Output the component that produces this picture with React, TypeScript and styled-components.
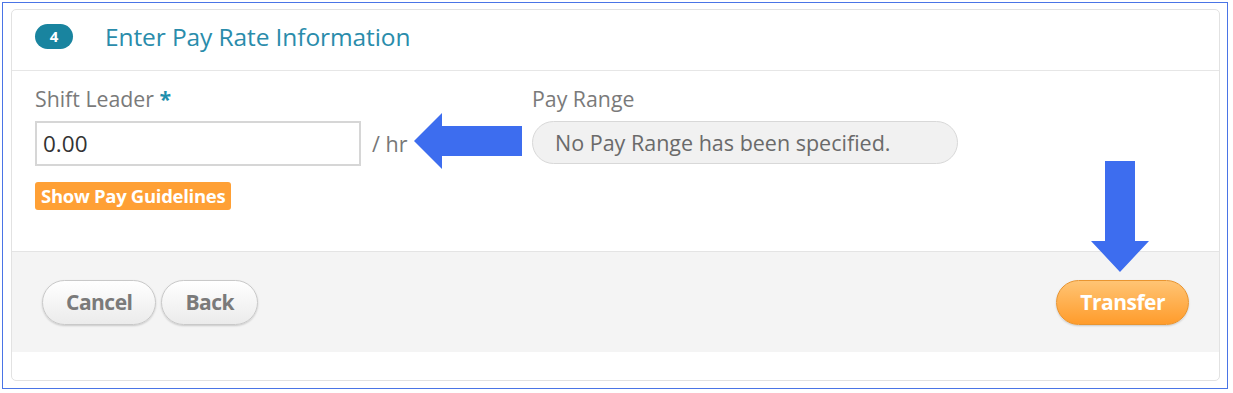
import React from "react";
import styled, { createGlobalStyle } from "styled-components";

const Global = createGlobalStyle`
  html, body { margin: 0; padding: 0; background: #ffffff; }
  body { font-family: "Open Sans", "Liberation Sans", sans-serif; }
  * { box-sizing: border-box; }
`;

const Frame = styled.div`
  position: relative;
  margin: 2px 0 0 2px;
  width: 1226px;
  height: 387px;
  border: 1.5px solid #4a74e6;
  padding: 6px 7px 7px 8px;
`;

const Card = styled.div`
  height: 100%;
  border: 1px solid #e2e2e2;
  border-radius: 5px;
  display: flex;
  flex-direction: column;
  background: #fff;
`;

const Header = styled.div`
  height: 61px;
  flex: none;
  display: flex;
  align-items: center;
  gap: 32px;
  padding: 0 0 8px 23px;
  border-bottom: 1px solid #e6e6e6;
`;

const StepBadge = styled.span`
  width: 38px;
  height: 25px;
  border-radius: 13px;
  background: #19849f;
  color: #fff;
  font-weight: 700;
  font-size: 15px;
  display: flex;
  align-items: center;
  justify-content: center;
`;

const Title = styled.h2`
  margin: 0;
  font-weight: 400;
  font-size: 24.5px;
  letter-spacing: -0.1px;
  color: #2a8cab;
`;

const Body = styled.div`
  flex: 1;
  padding: 15px 23px 0;
  display: flex;
  flex-direction: column;
`;

const FieldsRow = styled.div`
  display: flex;
  align-items: flex-start;
`;

const Field = styled.div<{ $width?: number }>`
  display: flex;
  flex-direction: column;
  width: ${(p) => (p.$width ? `${p.$width}px` : "auto")};
`;

const Label = styled.label`
  font-size: 21.3px;
  color: #7a7a7a;
  line-height: 26px;
  margin-bottom: 9px;
`;

const Required = styled.span`
  color: #1f8fad;
  font-weight: 700;
`;

const InputRow = styled.div`
  display: flex;
  align-items: center;
  gap: 11px;
`;

const TextInput = styled.input`
  width: 326px;
  height: 45px;
  border: 2px solid #d6d6d6;
  padding: 0 6px;
  font-family: inherit;
  font-size: 22.5px;
  color: #333;
  outline: none;
`;

const Unit = styled.span`
  font-size: 21.5px;
  color: #777;
`;

const RangePill = styled.div`
  width: 426px;
  height: 43px;
  border: 1px solid #d8d8d8;
  border-radius: 22px;
  background: #f1f1f1;
  display: flex;
  align-items: center;
  padding-left: 22px;
  font-size: 21.5px;
  color: #6a6a6a;
`;

const GuideTag = styled.span`
  align-self: flex-start;
  margin-top: 16px;
  background: #ffa035;
  color: #fff;
  font-weight: 700;
  font-size: 18.5px;
  letter-spacing: -0.3px;
  border-radius: 3px;
  padding: 3px 6px;
  line-height: 22px;
`;

const Footer = styled.div`
  height: 101px;
  flex: none;
  background: #f4f4f4;
  border-top: 1px solid #e4e4e4;
  display: flex;
  align-items: center;
  padding: 0 30px 0 30px;
  gap: 5px;
  margin-bottom: 28px;
`;

const PillButton = styled.button<{ $primary?: boolean }>`
  height: 45px;
  padding: 0 ${(p) => (p.$primary ? 23 : 23)}px;
  border-radius: 23px;
  font-family: inherit;
  font-weight: 700;
  font-size: 21px;
  letter-spacing: -0.5px;
  cursor: pointer;
  border: 1px solid ${(p) => (p.$primary ? "#e99530" : "#c9c9c9")};
  color: ${(p) => (p.$primary ? "#fff" : "#7a7a7a")};
  background: ${(p) =>
    p.$primary
      ? "linear-gradient(#ffc474, #ff9c2c)"
      : "linear-gradient(#ffffff, #ebebeb)"};
  box-shadow: 0 1px 2px rgba(0, 0, 0, 0.18);
`;

const Spacer = styled.div`
  flex: 1;
`;

const Arrow = styled.svg<{ $left: number; $top: number }>`
  position: absolute;
  left: ${(p) => p.$left}px;
  top: ${(p) => p.$top}px;
`;

export default function App() {
  return (
    <>
      <Global />
      <Frame>
        <Card>
          <Header>
            <StepBadge>4</StepBadge>
            <Title>Enter Pay Rate Information</Title>
          </Header>
          <Body>
            <FieldsRow>
              <Field $width={497}>
                <Label>
                  Shift Leader <Required>*</Required>
                </Label>
                <InputRow>
                  <TextInput defaultValue="0.00" />
                  <Unit>/ hr</Unit>
                </InputRow>
              </Field>
              <Field>
                <Label>Pay Range</Label>
                <RangePill>No Pay Range has been specified.</RangePill>
              </Field>
            </FieldsRow>
            <GuideTag>Show Pay Guidelines</GuideTag>
          </Body>
          <Footer>
            <PillButton>Cancel</PillButton>
            <PillButton>Back</PillButton>
            <Spacer />
            <PillButton $primary>Transfer</PillButton>
          </Footer>
        </Card>
        <Arrow $left={409} $top={106} width="112" height="60" viewBox="0 0 112 60">
          <polygon points="2,32 30,4 30,17 110,17 110,47 30,47 30,60" fill="#3d6def" />
        </Arrow>
        <Arrow $left={1086} $top={156} width="62" height="114" viewBox="0 0 62 114">
          <polygon points="16,2 46,2 46,82 60,82 31,113 2,82 16,82" fill="#3d6def" />
        </Arrow>
      </Frame>
    </>
  );
}
